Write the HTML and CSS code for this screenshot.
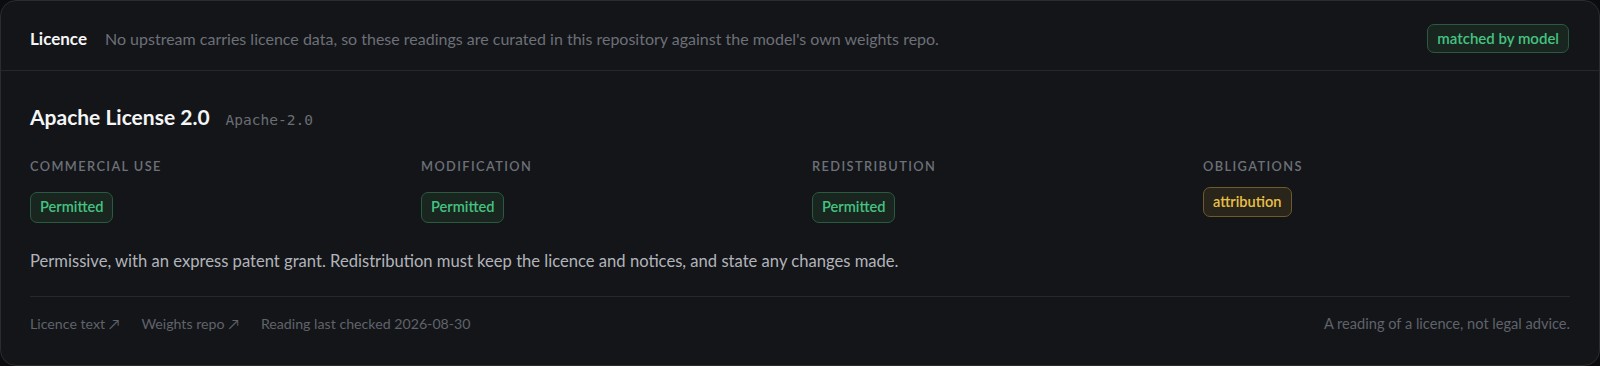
FILE: index.html
```html
<!DOCTYPE html>
<html lang="en">
<head>
<meta charset="utf-8">
<title>Licence</title>
<link rel="stylesheet" href="styles.css">
</head>
<body>
<section class="card">
  <header class="card-head">
    <h2 class="head-title">Licence</h2>
    <p class="head-desc">No upstream carries licence data, so these readings are curated in this repository against the model's own weights repo.</p>
    <span class="pill pill-green head-pill">matched by model</span>
  </header>
  <div class="card-body">
    <div class="title-row">
      <h3 class="lic-name">Apache License 2.0</h3>
      <code class="lic-id">Apache-2.0</code>
    </div>
    <div class="facts">
      <div class="fact">
        <div class="fact-label">Commercial use</div>
        <div class="fact-value"><span class="pill pill-green">Permitted</span></div>
      </div>
      <div class="fact">
        <div class="fact-label">Modification</div>
        <div class="fact-value"><span class="pill pill-green">Permitted</span></div>
      </div>
      <div class="fact">
        <div class="fact-label">Redistribution</div>
        <div class="fact-value"><span class="pill pill-green">Permitted</span></div>
      </div>
      <div class="fact">
        <div class="fact-label">Obligations</div>
        <div class="fact-list"><span class="pill pill-yellow">attribution</span></div>
      </div>
    </div>
    <p class="summary">Permissive, with an express patent grant. Redistribution must keep the licence and notices, and state any changes made.</p>
    <footer class="card-foot">
      <div class="foot-links">
        <a class="foot-link" href="#">Licence text ↗</a>
        <a class="foot-link" href="#">Weights repo ↗</a>
        <span class="foot-note">Reading last checked 2026-08-30</span>
      </div>
      <span class="foot-note foot-right">A reading of a licence, not legal advice.</span>
    </footer>
  </div>
</section>
</body>
</html>
```

FILE: styles.css
```css
* { box-sizing: border-box; }
html, body { margin: 0; padding: 0; }
body {
  background: #0c0c0e;
  font-family: Lato, "Noto Sans", sans-serif;
  color: #e8e9eb;
  width: 1600px;
  height: 366px;
  overflow: hidden;
}
.card {
  width: 1600px;
  height: 366px;
  background: #141519;
  border: 1px solid #2a2c31;
  border-radius: 16px;
  display: flex;
  flex-direction: column;
}
.card-head {
  display: flex;
  align-items: center;
  gap: 18px;
  padding: 23px 30px 17px 29px;
  border-bottom: 1px solid #25272c;
}
.head-title {
  margin: 0;
  font-size: 17px;
  font-weight: 700;
  color: #f4f5f6;
  line-height: 29px;
}
.head-desc {
  margin: 0;
  flex: 1;
  font-size: 16px;
  color: #6c7077;
  line-height: 29px;
}
.pill {
  display: inline-flex;
  align-items: center;
  height: 31px;
  padding: 0 9px;
  border-radius: 7px;
  font-size: 14.6px;
  font-weight: 600;
  border: 1px solid;
  line-height: 1;
}
.pill-green {
  color: #45c281;
  background: #19261f;
  border-color: #2a5a41;
}
.pill-yellow {
  color: #e9c047;
  background: #29251a;
  border-color: #6e5a2a;
  height: 30px;
}
.head-pill { height: 29px; font-size: 15px; }
.card-body {
  padding: 32px 29px 0 29px;
  display: flex;
  flex-direction: column;
}
.title-row {
  display: flex;
  align-items: baseline;
  gap: 16px;
}
.lic-name {
  margin: 0;
  font-size: 21px;
  font-weight: 700;
  color: #f4f5f6;
  line-height: 28px;
}
.lic-id {
  font-family: "DejaVu Sans Mono", "Liberation Mono", monospace;
  font-size: 14.5px;
  color: #6a6e74;
}
.facts {
  display: grid;
  grid-template-columns: repeat(4, 1fr);
  gap: 24px;
  margin-top: 27px;
}
.fact-label {
  font-size: 12.8px;
  font-weight: 600;
  letter-spacing: 1.4px;
  text-transform: uppercase;
  color: #6d7178;
  line-height: 16px;
}
.fact-value { margin-top: 18px; }
.fact-list { margin-top: 13px; display: flex; flex-wrap: wrap; gap: 6px; }
.summary {
  margin: 26px 0 0 0;
  font-size: 16.6px;
  color: #b1b4b9;
  line-height: 24px;
}
.card-foot {
  margin-top: 23px;
  border-top: 1px solid #25272c;
  padding-top: 17px;
  display: flex;
  justify-content: space-between;
  align-items: center;
  font-size: 14.2px;
  line-height: 20px;
}
.foot-links { display: flex; gap: 22px; }
.foot-link { color: #5f636a; text-decoration: none; }
.foot-note { color: #5f636a; }
.foot-right { font-size: 14.6px; }
```
